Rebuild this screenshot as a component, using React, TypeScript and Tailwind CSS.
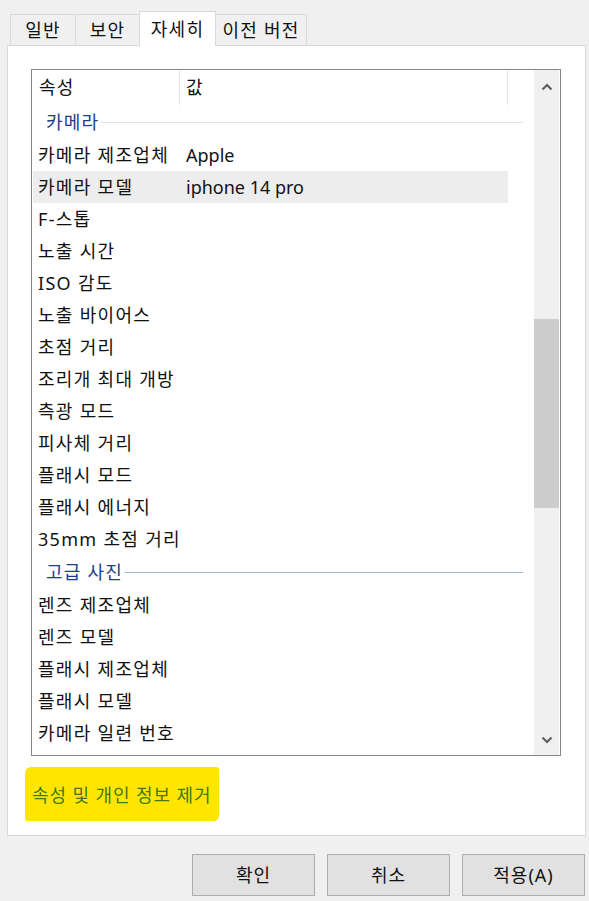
const font = "font-['Noto_Sans','Noto_Sans_CJK_KR',sans-serif]"

const cameraRows = [
  { name: "카메라 제조업체", value: "Apple" },
  { name: "카메라 모델", value: "iphone 14 pro", selected: true },
  { name: "F-스톱", value: "" },
  { name: "노출 시간", value: "" },
  { name: "ISO 감도", value: "" },
  { name: "노출 바이어스", value: "" },
  { name: "초점 거리", value: "" },
  { name: "조리개 최대 개방", value: "" },
  { name: "측광 모드", value: "" },
  { name: "피사체 거리", value: "" },
  { name: "플래시 모드", value: "" },
  { name: "플래시 에너지", value: "" },
  { name: "35mm 초점 거리", value: "" },
]

const photoRows = ["렌즈 제조업체", "렌즈 모델", "플래시 제조업체", "플래시 모델", "카메라 일련 번호"]

const Group = ({ title, line }: { title: string; line: string }) => (
  <div className="h-[34px] flex items-center pl-[13px] pr-[11px]">
    <span className="text-[18px] tracking-[1.2px] text-[#1e3c8c] pr-[2px]">{title}</span>
    <div className={`flex-1 h-px ${line}`} />
  </div>
)

const Row = ({ name, value, selected }: { name: string; value?: string; selected?: boolean }) => (
  <div className={`h-[32px] flex items-center w-[475px] ${selected ? "bg-[#ededed]" : ""}`}>
    <span className="w-[153px] pl-[5px] text-[18px] tracking-[1.3px] text-[#111] whitespace-nowrap">{name}</span>
    <span className="text-[18px] text-[#111]">{value}</span>
  </div>
)

const Tab = ({ label, w, active }: { label: string; w: string; active?: boolean }) => (
  <div
    className={`${w} flex items-center justify-center border border-b-0 border-[#d9d9d9] text-[18px] tracking-[1.2px] text-[#111] ${
      active ? "bg-white h-[35px] relative z-10 -mb-px" : "bg-[#f0f0f0] h-[31px]"
    }`}
  >
    {label}
  </div>
)

export default function App() {
  return (
    <div className={`w-[589px] h-[901px] bg-[#f0f0f0] overflow-hidden ${font}`}>
      <div className="flex items-end pl-[10px] h-[45px]">
        <Tab label="일반" w="w-[66px]" />
        <Tab label="보안" w="w-[65px] -ml-px" />
        <Tab label="자세히" w="w-[77px] -ml-px" active />
        <Tab label="이전 버전" w="w-[92px] -ml-px" />
      </div>

      <div className="ml-[7px] w-[579px] h-[791px] bg-white border border-[#d9d9d9] pt-[23px] pl-[23px]">
        <div className="w-[530px] h-[687px] border border-[#828790] flex">
          <div className="flex-1 pl-px">
            <div className="h-[35px] flex w-[475px]">
              <div className="w-[147px] pl-[6px] pt-[4px] text-[18px] tracking-[1.2px] text-[#111] border-r border-[#e5e5e5]">속성</div>
              <div className="flex-1 pl-[6px] pt-[4px] text-[18px] text-[#111] border-r border-[#e5e5e5]">값</div>
            </div>
            <Group title="카메라" line="bg-[#dde3ea]" />
            {cameraRows.map((r) => (
              <Row key={r.name} name={r.name} value={r.value} selected={r.selected} />
            ))}
            <Group title="고급 사진" line="bg-[#aab7ca]" />
            {photoRows.map((n) => (
              <Row key={n} name={n} />
            ))}
          </div>
          <div className="w-[25px] mr-px bg-[#f0f0f0] flex flex-col">
            <div className="h-[33px] flex items-center justify-center pt-[1px]">
              <svg width="12" height="8" viewBox="0 0 12 8">
                <path d="M1.5 6.5 L6 2 L10.5 6.5" fill="none" stroke="#606060" strokeWidth="2.2" />
              </svg>
            </div>
            <div className="h-[216px]" />
            <div className="h-[189px] bg-[#cdcdcd]" />
            <div className="flex-1" />
            <div className="h-[30px] flex items-center justify-center">
              <svg width="12" height="8" viewBox="0 0 12 8">
                <path d="M1.5 1.5 L6 6 L10.5 1.5" fill="none" stroke="#606060" strokeWidth="2.2" />
              </svg>
            </div>
          </div>
        </div>

        <div className="mt-[11px] -ml-[6px] w-[194px] h-[54px] bg-[#ffe600] rounded-[6px_3px_5px_2px] flex items-center pl-[7px] pt-[2px]">
          <span className="text-[18px] tracking-[0.9px] text-[#3f7a12] whitespace-nowrap">속성 및 개인 정보 제거</span>
        </div>
      </div>

      <div className="flex justify-end gap-[12px] pr-[4px] mt-[18px]">
        {["확인", "취소", "적용(A)"].map((b) => (
          <div key={b} className="w-[123px] h-[42px] bg-[#e1e1e1] border border-[#adadad] flex items-center justify-center text-[18px] tracking-[1px] text-[#111]">
            {b}
          </div>
        ))}
      </div>
    </div>
  )
}
